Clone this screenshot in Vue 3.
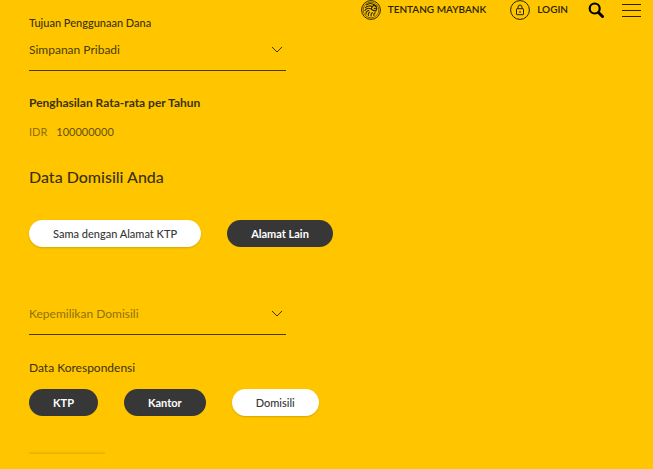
<template>
  <div class="page">
    <header class="topbar">
      <a href="#about" class="top-link">
        <svg width="20" height="20" viewBox="0 0 20 20" fill="none" stroke="currentColor" aria-hidden="true">
          <circle cx="10" cy="10" r="9.4" />
          <circle cx="10" cy="10" r="7.8" stroke-width=".6" />
          <path d="M5 5.2c2-1.7 4.8-2 6.7-1.2 1.6.6 2.6 1.7 2.9 3M4 8c1.8-2.2 5.4-2.7 7.5-1.4M3.6 11c1.2-2.6 4-3.3 6.2-2.2M5 14.5c-.3-2.3 1-4 3.3-4.1M7.6 16c-.8-1.8-.2-3.4 1.5-4M10.3 16.5c-.7-1.8 0-3.6 1.5-4.1M13 15.8c-.5-1.5.1-2.7 1.5-3.3" stroke-width="1.1" />
          <path d="M11 7.2l2-2.2 2 1 .8 2.7-1 2.3-2.8-.6-1.8-1.3zM12.8 8.3l2 .4" stroke-width="1.2" />
        </svg>
        <span>TENTANG MAYBANK</span>
      </a>
      <a href="#login" class="top-link login">
        <svg width="20" height="20" viewBox="0 0 20 20" fill="none" stroke="currentColor" aria-hidden="true">
          <circle cx="10" cy="10" r="9.4" />
          <rect x="6.5" y="8.7" width="7" height="6" rx=".5" />
          <path d="M8 8.5V7a2 2 0 0 1 4 0v1.5M10 11v2" />
        </svg>
        <span>LOGIN</span>
      </a>
      <button type="button" class="icon-btn search" aria-label="Search">
        <svg width="16" height="16" viewBox="0 0 16 16" fill="none" stroke="currentColor">
          <circle cx="6.7" cy="6.5" r="5" stroke-width="2.2" />
          <path d="M10.5 10.5l4 4" stroke-width="3" stroke-linecap="round" />
        </svg>
      </button>
      <button type="button" class="icon-btn" aria-label="Menu">
        <svg width="20" height="14" viewBox="0 0 20 14" stroke="currentColor">
          <path d="M1 1.5h19M1 7.5h19M1 13.5h19" />
        </svg>
      </button>
    </header>

    <form class="form" @submit.prevent>
      <label for="purpose" class="field-label">Tujuan Penggunaan Dana</label>
      <div class="select-box">
        <select id="purpose" v-model="purpose">
          <option>Simpanan Pribadi</option>
        </select>
        <svg class="chevron" width="12" height="8" viewBox="0 0 12 8" fill="none" stroke="currentColor" aria-hidden="true">
          <path d="M1 1l5 5 5-5" />
        </svg>
      </div>

      <label for="income" class="income-label">Penghasilan Rata-rata per Tahun</label>
      <div class="income">
        <span>IDR</span>
        <input id="income" v-model="income" type="text" inputmode="numeric" />
      </div>

      <h2>Data Domisili Anda</h2>
      <div class="pills">
        <button
          v-for="option in addressOptions"
          :key="option"
          type="button"
          class="pill"
          :class="{ selected: option === address }"
          @click="address = option"
        >{{ option }}</button>
      </div>

      <div class="select-box ownership">
        <select v-model="ownership" class="placeholder" aria-label="Kepemilikan Domisili">
          <option value="">Kepemilikan Domisili</option>
        </select>
        <svg class="chevron" width="12" height="8" viewBox="0 0 12 8" fill="none" stroke="currentColor" aria-hidden="true">
          <path d="M1 1l5 5 5-5" />
        </svg>
      </div>

      <h3>Data Korespondensi</h3>
      <div class="pills">
        <button
          v-for="option in mailOptions"
          :key="option"
          type="button"
          class="pill"
          :class="{ selected: option === mail }"
          @click="mail = option"
        >{{ option }}</button>
      </div>
      <div class="next-edge"></div>
    </form>
  </div>
</template>

<script setup>
import { ref } from 'vue'

const purpose = ref('Simpanan Pribadi')
const income = ref('100000000')
const ownership = ref('')

const addressOptions = ['Sama dengan Alamat KTP', 'Alamat Lain']
const address = ref('Sama dengan Alamat KTP')

const mailOptions = ['KTP', 'Kantor', 'Domisili']
const mail = ref('Domisili')
</script>

<style>
body {
  background: #ffc600;
}
</style>

<style scoped>
.page {
  position: relative;
  color: #3b3210;
  font-family: Lato, sans-serif;
}

/* the bar floats over the scrolled form */
.topbar {
  position: absolute;
  top: 0;
  right: 0;
  display: flex;
  align-items: center;
  height: 20px;
  padding-right: 12px;
  color: #2b2300;
}

.top-link {
  display: flex;
  align-items: center;
  gap: 7px;
  color: inherit;
  font-size: 10px;
  font-weight: 600;
  line-height: 16px;
  text-decoration: none;
}

.login {
  margin-left: 24px;
}

.top-link span {
  padding-bottom: 2px;
}

button {
  border: 0;
  font-family: inherit;
  cursor: pointer;
}

.icon-btn {
  display: flex;
  padding: 0;
  background: none;
  color: #2b2300;
}

.search {
  margin: 0 17px 0 20px;
  color: #000;
}

.form {
  padding: 16px 29px 0;
}

.field-label {
  display: block;
  font-size: 11px;
  font-weight: 500;
  line-height: 14px;
}

.select-box {
  display: grid;
  align-items: center;
  max-width: 257px;
  height: 41px;
  border-bottom: 1px solid #4a3c08;
  box-sizing: border-box;
}

.select-box > * {
  grid-area: 1 / 1;
}

select {
  width: 100%;
  height: 40px;
  padding: 0 0 2px;
  border: 0;
  background: none;
  color: #4a3c08;
  font-family: inherit;
  font-size: 12px;
  appearance: none;
}

select.placeholder {
  color: #8f7109;
}

.chevron {
  justify-self: end;
  margin-right: 3px;
  pointer-events: none;
}

.income-label {
  display: block;
  margin-top: 24px;
  font-size: 12px;
  font-weight: 700;
  line-height: 16px;
}

.income {
  display: flex;
  align-items: center;
  gap: 9px;
  height: 16px;
  margin-top: 12px;
  color: #8f7109;
  font-size: 11px;
}

.income input {
  width: 120px;
  padding: 0;
  border: 0;
  background: none;
  color: #65500a;
  font: inherit;
}

h2 {
  margin: 28px 0 0;
  font-size: 16px;
  font-weight: 500;
  line-height: 20px;
}

h3 {
  margin: 24px 0 12px;
  font-size: 12px;
  font-weight: 400;
  line-height: 18px;
}

.pills {
  display: flex;
  gap: 26px;
}

h2 + .pills {
  margin-top: 33px;
}

.pill {
  height: 27px;
  padding: 0 24px;
  border-radius: 14px;
  background: #373737;
  color: #fff;
  font-size: 11px;
  font-weight: 700;
}

.pill.selected {
  background: #fff;
  color: #373737;
  font-weight: 500;
  box-shadow: 0 1px 2px rgba(90, 70, 0, 0.25);
}

.ownership {
  margin-top: 47px;
}

.next-edge {
  width: 76px;
  height: 3px;
  margin-top: 35px;
  background: linear-gradient(transparent, rgba(120, 90, 0, 0.22));
}
</style>
